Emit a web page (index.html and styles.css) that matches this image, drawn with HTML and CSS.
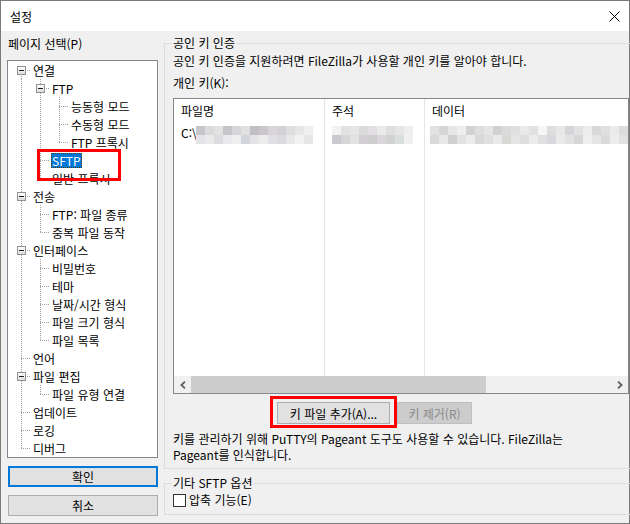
FILE: index.html
```html
<!DOCTYPE html>
<html lang="ko">
<head>
    <meta charset="UTF-8">
    <meta name="viewport" content="width=device-width, initial-scale=1.0">
    <title>설정</title>
    <link rel="stylesheet" href="styles.css">
</head>
<body>
<div class="window">
    <div class="titlebar">
        <span class="title">설정</span>
        <svg class="close" width="11" height="11" viewBox="0 0 11 11">
            <path d="M0.5 0.5L10.5 10.5M10.5 0.5L0.5 10.5" stroke="#000" stroke-width="1" fill="none"/>
        </svg>
    </div>

    <div class="content">
        <div class="side">
            <div class="side-label">페이지 선택(P)</div>
            <div class="tree">
                <div class="node"><span class="c first"><i class="exp"></i></span><span class="t">연결</span></div>
                <div class="node"><span class="g"></span><span class="c mid"><i class="exp"></i></span><span class="t">FTP</span></div>
                <div class="node"><span class="g"></span><span class="g"></span><span class="c mid"></span><span class="t">능동형 모드</span></div>
                <div class="node"><span class="g"></span><span class="g"></span><span class="c mid"></span><span class="t">수동형 모드</span></div>
                <div class="node"><span class="g"></span><span class="g"></span><span class="c last"></span><span class="t">FTP 프록시</span></div>
                <div class="node flag"><span class="g"></span><span class="c mid"></span><span class="t selected">SFTP</span></div>
                <div class="node"><span class="g"></span><span class="c last"></span><span class="t">일반 프록시</span></div>
                <div class="node"><span class="c mid"><i class="exp"></i></span><span class="t">전송</span></div>
                <div class="node"><span class="g"></span><span class="c mid"></span><span class="t">FTP: 파일 종류</span></div>
                <div class="node"><span class="g"></span><span class="c last"></span><span class="t">중복 파일 동작</span></div>
                <div class="node"><span class="c mid"><i class="exp"></i></span><span class="t">인터페이스</span></div>
                <div class="node"><span class="g"></span><span class="c mid"></span><span class="t">비밀번호</span></div>
                <div class="node"><span class="g"></span><span class="c mid"></span><span class="t">테마</span></div>
                <div class="node"><span class="g"></span><span class="c mid"></span><span class="t">날짜/시간 형식</span></div>
                <div class="node"><span class="g"></span><span class="c mid"></span><span class="t">파일 크기 형식</span></div>
                <div class="node"><span class="g"></span><span class="c last"></span><span class="t">파일 목록</span></div>
                <div class="node"><span class="c mid"></span><span class="t">언어</span></div>
                <div class="node"><span class="c mid"><i class="exp"></i></span><span class="t">파일 편집</span></div>
                <div class="node"><span class="g"></span><span class="c last"></span><span class="t">파일 유형 연결</span></div>
                <div class="node"><span class="c mid"></span><span class="t">업데이트</span></div>
                <div class="node"><span class="c mid"></span><span class="t">로깅</span></div>
                <div class="node"><span class="c last"></span><span class="t">디버그</span></div>
            </div>
            <button class="btn btn-default">확인</button>
            <button class="btn btn-cancel">취소</button>
        </div>

        <div class="main">
            <fieldset class="group group-key">
                <legend>공인 키 인증</legend>
                <p class="line">공인 키 인증을 지원하려면 FileZilla가 사용할 개인 키를 알아야 합니다.</p>
                <p class="line key-label">개인 키(K):</p>
                <div class="list">
                    <div class="list-body">
                        <div class="col col-name">
                            <div class="col-head">파일명</div>
                            <div class="cell"><span class="path">C:\</span><span class="blur blur-name"></span></div>
                        </div>
                        <div class="col col-comment">
                            <div class="col-head">주석</div>
                            <div class="cell"><span class="blur blur-comment"></span></div>
                        </div>
                        <div class="col col-data">
                            <div class="col-head">데이터</div>
                            <div class="cell cell-data"><span class="blur blur-data"></span></div>
                        </div>
                    </div>
                    <div class="hscroll">
                        <span class="arrow">
                            <svg width="6" height="8" viewBox="0 0 6 8"><polyline points="5,0.6 1.4,4 5,7.4" fill="none" stroke="#606060" stroke-width="1.8"/></svg>
                        </span>
                        <span class="thumb"></span>
                        <span class="track"></span>
                        <span class="arrow">
                            <svg width="6" height="8" viewBox="0 0 6 8"><polyline points="1,0.6 4.6,4 1,7.4" fill="none" stroke="#606060" stroke-width="1.8"/></svg>
                        </span>
                    </div>
                </div>
                <div class="key-buttons">
                    <span class="flag-btn"><button class="btn btn-add">키 파일 추가(A)...</button></span>
                    <button class="btn btn-remove" disabled>키 제거(R)</button>
                </div>
                <p class="note">키를 관리하기 위해 PuTTY의 Pageant 도구도 사용할 수 있습니다. FileZilla는<br>Pageant를 인식합니다.</p>
            </fieldset>

            <fieldset class="group group-other">
                <legend>기타 SFTP 옵션</legend>
                <label class="check"><span class="box"></span>압축 기능(E)</label>
            </fieldset>
        </div>
    </div>
</div>
</body>
</html>
```

FILE: styles.css
```css
* {
    box-sizing: border-box;
}
body {
    margin: 0;
    font-family: "Noto Sans CJK KR", "Noto Sans", sans-serif;
    font-size: 12px;
    color: #000;
}
.window {
    width: 630px;
    height: 524px;
    border: 1px solid #7a7a7a;
    background-color: #f0f0f0;
    display: flex;
    flex-direction: column;
}
.titlebar {
    height: 30px;
    flex: none;
    background-color: #fff;
    display: flex;
    align-items: center;
    justify-content: space-between;
    padding: 0 9px 0 9px;
}
.close {
    display: block;
}
.content {
    flex: 1;
    display: flex;
    gap: 6px;
    padding: 5px 6px 0 6px;
}

/* left column */
.side {
    width: 151px;
    flex: none;
    display: flex;
    flex-direction: column;
}
.side-label {
    line-height: 16px;
    padding-left: 1px;
}
.tree {
    margin-top: 8px;
    height: 398px;
    border: 1px solid #828790;
    background-color: #fff;
    overflow: hidden;
}
.node {
    display: flex;
    align-items: center;
    height: 18px;
    padding-left: 3px;
    white-space: nowrap;
}
.g, .c {
    flex: none;
    width: 19px;
    height: 18px;
    display: flex;
    align-items: flex-start;
    background-repeat: no-repeat;
}
.g {
    background-image: repeating-linear-gradient(to bottom, #a0a0a0 0 1px, transparent 1px 2px);
    background-size: 1px 18px;
    background-position: 10px 0;
}
.c {
    background-image:
        repeating-linear-gradient(to bottom, #a0a0a0 0 1px, transparent 1px 2px),
        repeating-linear-gradient(to right, #a0a0a0 0 1px, transparent 1px 2px);
    background-position: 10px 0, 10px 9px;
    background-size: 1px 18px, 9px 1px;
}
.c.first {
    background-position: 10px 9px, 10px 9px;
    background-size: 1px 9px, 9px 1px;
}
.c.last {
    background-size: 1px 10px, 9px 1px;
}
.exp {
    display: block;
    width: 9px;
    height: 9px;
    margin: 5px 0 0 6px;
    border: 1px solid #919191;
    background:
        linear-gradient(#1e1e1e, #1e1e1e) center / 5px 1px no-repeat,
        linear-gradient(#fff, #dcdcdc);
}
.t {
    margin-left: 2px;
    padding: 0 1px;
    line-height: 15px;
}
.t.selected {
    background-color: #0078d7;
    color: #fff;
    outline: 1px dotted #5a3a10;
    outline-offset: -1px;
}
.flag {
    position: relative;
}
.flag::after {
    content: "";
    position: absolute;
    left: 29px;
    top: -2px;
    width: 78px;
    height: 26px;
    border: 3px solid #ff0000;
    z-index: 1;
}

/* buttons */
.btn {
    font-family: inherit;
    font-size: 12px;
    color: #000;
    background-color: #e1e1e1;
    border: 1px solid #adadad;
    padding: 0;
    margin: 0;
    height: 21px;
    line-height: 17px;
}
.btn-default, .btn-cancel {
    width: 150px;
    margin-left: 1px;
}
.btn-default {
    margin-top: 8px;
    border: 2px solid #0078d7;
}
.btn-cancel {
    margin-top: 8px;
}

/* right column */
.main {
    flex: 1;
    display: flex;
    flex-direction: column;
}
.group {
    margin: 0;
    min-width: 0;
    border: 1px solid #dcdcdc;
    padding: 3px 8px 7px 8px;
}
.group legend {
    padding: 0 2px;
    margin-left: -2px;
    line-height: 14px;
}
.line {
    margin: 0;
    line-height: 16px;
    white-space: nowrap;
}
.key-label {
    margin-top: 6px;
}
.list {
    margin-top: 7px;
    height: 296px;
    border: 1px solid #828790;
    background-color: #fff;
    display: flex;
    flex-direction: column;
}
.list-body {
    flex: 1;
    display: flex;
    overflow: hidden;
}
.col {
    flex: none;
    border-right: 1px solid #e5e5e5;
}
.col-name {
    width: 151px;
}
.col-comment {
    width: 100px;
}
.col-data {
    flex: 1;
    min-width: 0;
    overflow: hidden;
    border-right: none;
}
.col-head {
    height: 24px;
    line-height: 24px;
    padding-left: 7px;
}
.cell {
    display: flex;
    align-items: flex-start;
    height: 20px;
    padding: 1px 0 0 7px;
    white-space: nowrap;
}
.cell-data {
    padding-left: 5px;
}
.path {
    line-height: 18px;
}
.blur {
    flex: none;
    display: block;
    height: 18px;
    margin-top: 2px;
    background-repeat: no-repeat;
    background-size: 100% 9px;
    background-position: 0 0, 0 9px;
}
.blur-name {
    width: 117px;
    margin-left: -1px;
    background-image:
        linear-gradient(90deg, #c6c6ca 0 9px, #dadada 9px 18px, #e2e2e2 18px 27px, #c6c6ca 27px 36px, #d6d6da 36px 45px, #e0e0e0 45px 54px, #c2bec6 54px 63px, #cac6cc 63px 72px, #d8d4d8 72px 81px, #d2d2d6 81px 90px, #dedede 90px 99px, #e6e6e6 99px 108px, #efefef 108px 117px),
        linear-gradient(90deg, #e4e4e8 0 9px, #eaeaea 9px 18px, #dcdce0 18px 27px, #eaeaee 27px 36px, #eeeeee 36px 45px, #d4d4dc 45px 54px, #e4e4e8 54px 63px, #ececec 63px 72px, #e0e0e4 72px 81px, #dcdce0 81px 90px, #e8e8e8 90px 99px, #f2f2f2 99px 108px, #e6e6e6 108px 117px);
}
.blur-comment {
    width: 81px;
    background-image:
        linear-gradient(90deg, #f2f2f2 0 9px, #e2e2e2 9px 18px, #e6e6e6 18px 27px, #dadada 27px 36px, #e2dee2 36px 45px, #eaeaea 45px 54px, #dedede 54px 63px, #e6e6e6 63px 72px, #eeeeee 72px 81px),
        linear-gradient(90deg, #cacace 0 9px, #d6d6d6 9px 18px, #e2e2e2 18px 27px, #d2ced2 27px 36px, #cecece 36px 45px, #dad6da 45px 54px, #d2d2d2 54px 63px, #dadede 63px 72px, #f0f0f0 72px 81px);
}
.blur-data {
    width: 198px;
    background-image:
        linear-gradient(90deg, #e2e2e2 0 9px, #d6d6d6 9px 18px, #e6e6e6 18px 27px, #eeeeee 27px 36px, #d2d2d2 36px 45px, #dedede 45px 54px, #e4e4e4 54px 63px, #d2d0d2 63px 72px, #dadada 72px 81px, #e0e0e0 81px 90px, #eaeaea 90px 99px, #e2e2e2 99px 108px, #f6f6f6 108px 117px, #dedede 117px 126px, #e8e8e8 126px 135px, #d6d6da 135px 144px, #e2e2e2 144px 153px, #ececec 153px 162px, #d8d8d8 162px 171px, #e0e0e0 171px 180px, #eaeaea 180px 189px, #dcdcdc 189px 198px),
        linear-gradient(90deg, #dadada 0 9px, #e8e8e8 9px 18px, #d0d0d0 18px 27px, #e2e2e2 27px 36px, #ececec 36px 45px, #d8d8d8 45px 54px, #e0e0e0 54px 63px, #eaeaea 63px 72px, #d8d8d4 72px 81px, #e4e4e4 81px 90px, #dedede 90px 99px, #ececec 99px 108px, #e0e0e0 108px 117px, #d8d8dc 117px 126px, #eaeaea 126px 135px, #e2e2e2 135px 144px, #d6d6d6 144px 153px, #eeeeee 153px 162px, #e4e4e4 162px 171px, #dadada 171px 180px, #ececec 180px 189px, #e2e2e2 189px 198px);
}
.hscroll {
    flex: none;
    height: 17px;
    display: flex;
    background-color: #f0f0f0;
}
.arrow {
    width: 17px;
    flex: none;
    display: flex;
    align-items: center;
    justify-content: center;
}
.arrow svg {
    display: block;
}
.thumb {
    width: 295px;
    flex: none;
    background-color: #cdcdcd;
}
.track {
    flex: 1;
}
.key-buttons {
    margin-top: 8px;
    padding-left: 104px;
    display: flex;
    gap: 7px;
}
.flag-btn {
    position: relative;
    display: flex;
}
.flag-btn::after {
    content: "";
    position: absolute;
    left: -7px;
    right: -7px;
    top: -6px;
    bottom: -4px;
    border: 3px solid #ff0000;
}
.btn-add {
    width: 113px;
    height: 22px;
}
.btn-remove {
    width: 75px;
    height: 22px;
    background-color: #cccccc;
    border-color: #bfbfbf;
    color: #8a8a8a;
}
.note {
    margin: 7px 0 0 0;
    line-height: 16px;
    white-space: nowrap;
}
.group-key {
    padding-bottom: 5px;
}
.group-other {
    margin-top: 7px;
    padding-top: 2px;
    padding-bottom: 6px;
}
.check {
    display: flex;
    align-items: center;
    height: 16px;
    line-height: 16px;
}
.box {
    width: 13px;
    height: 13px;
    border: 1px solid #333;
    background-color: #fff;
    margin-right: 3px;
}
```
